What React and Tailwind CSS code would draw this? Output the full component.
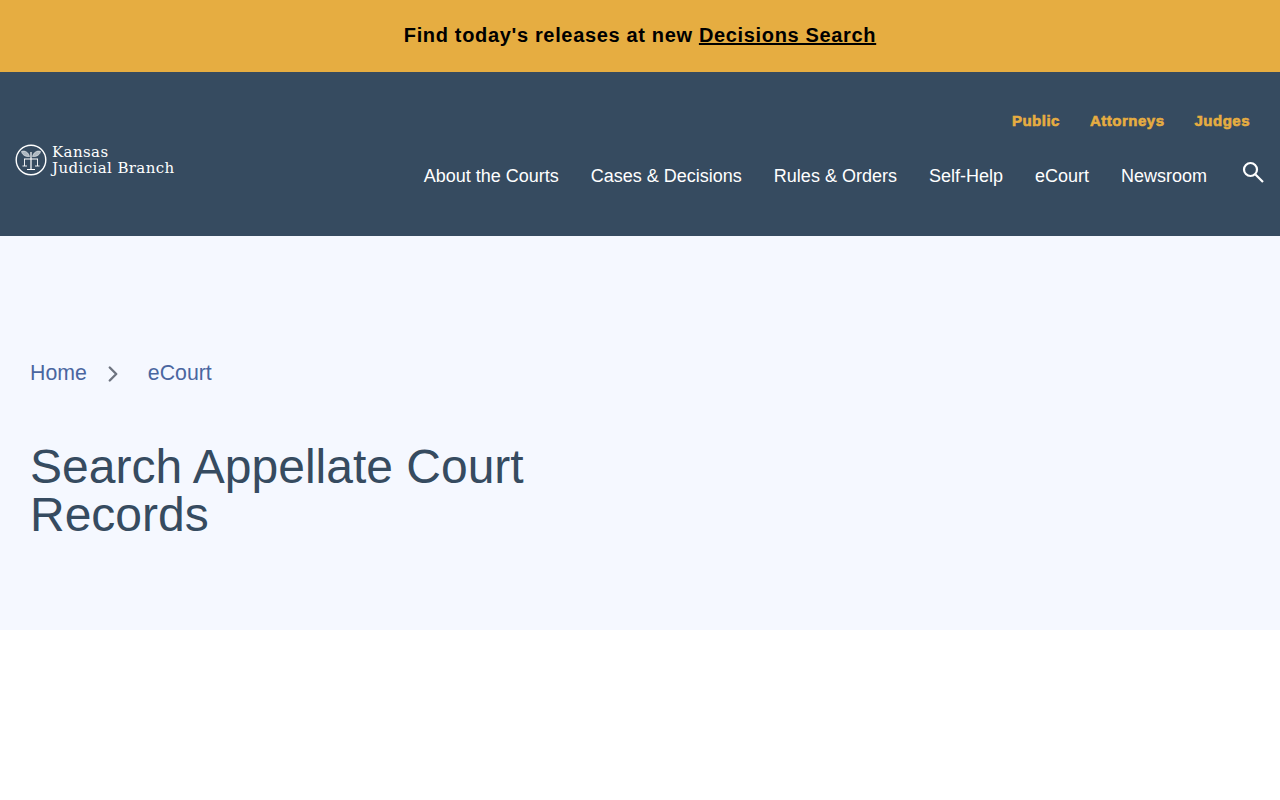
import { ChevronRight } from "lucide-react";

const audience = ["Public", "Attorneys", "Judges"];
const mainNav = ["About the Courts", "Cases & Decisions", "Rules & Orders", "Self-Help", "eCourt", "Newsroom"];

function Seal() {
  return (
    <svg width="32" height="32" viewBox="0 0 32 32" fill="none" stroke="#fff" className="shrink-0">
      <circle cx="16" cy="16" r="14.800" strokeWidth="1.400" />
      {/* wings */}
      <path d="M14.500 12.500C13.500 8.500 10 6 6.500 7.500c.5 3 3.500 5.500 8 5Z" fill="#aeb8c1" strokeWidth="0.500" />
      <path d="M17.500 12.500c1-4 4.500-6.500 8-5-.5 3-3.500 5.500-8 5Z" fill="#aeb8c1" strokeWidth="0.500" />
      {/* scales */}
      <path d="M16 8v17M9 15h14M12 25.500h8" strokeWidth="1.200" />
      <path d="M9.500 15v7M22.500 15v7" strokeWidth="0.900" />
      <path d="M7.500 22h4.500M20 22h4.500" strokeWidth="0.900" />
    </svg>
  );
}

function SearchIcon() {
  return (
    <svg width="24" height="24" viewBox="0 0 24 24" fill="none" stroke="#fff" strokeWidth="2.200">
      <circle cx="9.500" cy="9.500" r="6.500" />
      <path d="m14.500 14.500 7.500 7.500" />
    </svg>
  );
}

export default function App() {
  return (
    <div className="min-h-[800px] bg-white font-['Liberation_Sans',Arial,sans-serif]">
      <div className="flex h-[72px] items-center justify-center bg-[#e6ad41] pb-[2px] text-[20px] font-bold tracking-[0.66px] text-black">
        <p>
          Find today's releases at new <a href="#" className="underline">Decisions Search</a>
        </p>
      </div>

      <header className="flex h-[164px] items-center justify-between bg-[#364b60] pl-[15px] pr-[14px] text-white">
        <a href="#" className="mt-[12px] flex items-center gap-[5px]">
          <Seal />
          <span className="font-['DejaVu_Serif',serif] text-[15px] leading-[16px] tracking-[0.4px]">
            Kansas
            <br />
            Judicial Branch
          </span>
        </a>

        <div className="mb-[4px] flex flex-col items-end">
          <nav className="flex gap-[30px] pr-[16px] text-[15px] leading-[18px] font-black tracking-[0.5px] text-[#e6ad41] [-webkit-text-stroke:0.6px_#e6ad41]">
            {audience.map((item) => (
              <a key={item} href="#">{item}</a>
            ))}
          </nav>
          <div className="mt-[30px] flex items-center">
            <nav className="flex gap-[32px] text-[18px] leading-[24px]">
              {mainNav.map((item) => (
                <a key={item} href="#">{item}</a>
              ))}
            </nav>
            <span className="mb-[8px] ml-[35px] -translate-x-px">
              <SearchIcon />
            </span>
          </div>
        </div>
      </header>

      <section className="h-[394px] bg-[#f5f8ff] px-[30px] pt-[122px]">
        <div className="flex items-center text-[21.300px] leading-[26px] text-[#4a66a0]">
          <a href="#">Home</a>
          <ChevronRight size={26} strokeWidth={2.200} className="ml-[13px] mr-[22px] mt-[3px] text-[#6e7480]" />
          <a href="#">eCourt</a>
        </div>
        <h1 className="mt-[56px] max-w-[600px] text-[48px] leading-[48px] font-normal text-[#364b60]">
          Search Appellate Court Records
        </h1>
      </section>
    </div>
  );
}
